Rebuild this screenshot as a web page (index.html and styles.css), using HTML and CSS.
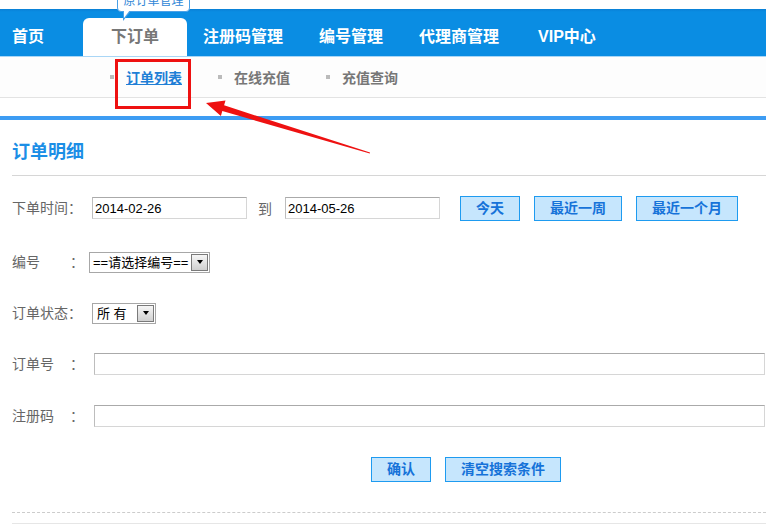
FILE: index.html
```html
<!DOCTYPE html>
<html>
<head>
<meta charset="utf-8">
<title>订单明细</title>
<link rel="stylesheet" href="styles.css">
</head>
<body>
<div class="header">
	<div class="nav">
		<a class="navItem home">首页</a>
		<a class="navItem current">下订单<span class="tip">原订单管理</span></a>
		<a class="navItem">注册码管理</a>
		<a class="navItem">编号管理</a>
		<a class="navItem agent">代理商管理</a>
		<a class="navItem">VIP中心</a>
	</div>
	<div class="subNav">
		<a class="subItem on">订单列表</a>
		<a class="subItem">在线充值</a>
		<a class="subItem">充值查询</a>
	</div>
</div>

<div class="content">
	<h2 class="title">订单明细</h2>
	<div class="search">
		<div class="row dates">
			<label class="lbl">下单时间：</label>
			<input class="txt date" type="text" value="2014-02-26">
			<span class="to">到</span>
			<input class="txt date" type="text" value="2014-05-26">
			<span class="quick">
				<button type="button" class="btn">今天</button>
				<button type="button" class="btn">最近一周</button>
				<button type="button" class="btn">最近一个月</button>
			</span>
		</div>
		<div class="row">
			<label class="lbl spaced near"><span class="lblName">编号</span>：</label>
			<span class="sel"><span class="selText">==请选择编号==</span><span class="selArrow"></span></span>
		</div>
		<div class="row">
			<label class="lbl">订单状态：</label>
			<span class="sel status"><span class="selText">所 有</span><span class="selArrow"></span></span>
		</div>
		<div class="row">
			<label class="lbl spaced"><span class="lblName">订单号</span>：</label>
			<input class="txt long" type="text">
		</div>
		<div class="row regcode">
			<label class="lbl spaced"><span class="lblName">注册码</span>：</label>
			<input class="txt long" type="text">
		</div>
		<div class="row actions">
			<button type="button" class="btn">确认</button>
			<button type="button" class="btn">清空搜索条件</button>
		</div>
	</div>
	<div class="dashLine"></div>
	<div class="footLine"></div>
</div>

<!-- annotation marks -->
<div class="markBox"></div>
<svg class="markArrow" width="180" height="70" viewBox="0 0 180 70">
	<polygon fill="#ee1111" points="6,13 25.5,10.5 24.1,15.3 170,62.6 169.8,63.6 22.3,21.1 20.9,25.9"/>
</svg>
</body>
</html>
```

FILE: styles.css
```css
body{
	margin: 0;
	font: 14px "Liberation Sans", "Noto Sans CJK SC", sans-serif;
	color: #666;
	background: #fff;
	position: relative;
	overflow: hidden;
}
.header{
	padding-top: 9px;
}
.nav{
	display: flex;
	align-items: flex-end;
	height: 47px;
	padding-left: 12px;
	background: linear-gradient(#0a80d6, #0a8de3 3px);
	border-bottom: 1px solid #a9d6f6;
}
.navItem{
	position: relative;
	height: 38px;
	line-height: 38px;
	font-size: 16px;
	font-weight: bold;
	color: #fff;
	margin-right: 36px;
	white-space: nowrap;
}
.navItem.home{
	margin-right: 39px;
}
.navItem.agent{
	margin-right: 39px;
}
.navItem.current{
	background: #fff;
	color: #777;
	padding: 0 28px;
	margin-right: 16px;
	border-radius: 6px 6px 0 0;
}
.tip{
	position: absolute;
	left: 34px;
	top: -28px;
	width: 71px;
	height: 20px;
	line-height: 20px;
	border: 1px solid #4aa0e6;
	border-radius: 4px;
	background: #fff;
	color: #2f86d6;
	font-size: 12px;
	font-weight: normal;
	text-align: center;
}
.tip:before{
	content: "";
	position: absolute;
	left: 5px;
	bottom: -10px;
	border-right: 8px solid transparent;
	border-top: 10px solid #4aa0e6;
}
.tip:after{
	content: "";
	position: absolute;
	left: 6px;
	bottom: -7px;
	border-right: 6px solid transparent;
	border-top: 8px solid #fff;
}
.subNav{
	display: flex;
	align-items: center;
	height: 40px;
	padding-left: 110px;
	background: #fdfdfd;
	border-bottom: 1px solid #e3e3e3;
}
.subItem{
	display: flex;
	align-items: center;
	font-weight: bold;
	color: #777;
	margin-right: 36px;
}
.subItem:before{
	content: "";
	width: 4px;
	height: 4px;
	background: #bbb;
	margin-right: 12px;
}
.subItem.on{
	color: #1f7fd6;
	text-decoration: underline;
}
.content{
	margin-top: 18px;
	border-top: 4px solid #3d9cf3;
	padding-left: 12px;
}
.title{
	margin: 0;
	padding: 20px 0 11px;
	font-size: 18px;
	line-height: 24px;
	color: #1b8ee6;
	border-bottom: 1px solid #d6d6d6;
}
.search{
	display: flex;
	flex-direction: column;
	gap: 27px;
	padding-top: 20px;
}
.row{
	display: flex;
	align-items: center;
	height: 24px;
}
.row.dates{
	margin-bottom: 3px;
}
.row.regcode{
	margin-top: 1px;
}
.row.actions{
	margin-top: 2px;
	padding-left: 359px;
	gap: 14px;
}
.lbl{
	flex: none;
	width: 70px;
	margin-right: 10px;
	white-space: nowrap;
	line-height: 20px;
}
.lbl.spaced{
	width: 72px;
}
.lbl.near{
	margin-right: 5px;
}
.lblName{
	display: inline-block;
	width: 58px;
}
.txt{
	box-sizing: border-box;
	height: 22px;
	padding: 0 2px;
	border: 1px solid #d6d6d6;
	border-top-color: #aaa;
	border-left-color: #bdbdbd;
	font: 13px "Liberation Sans", sans-serif;
	color: #000;
	outline: none;
}
.date{
	width: 155px;
}
.long{
	width: 671px;
}
.to{
	margin: 0 13px 0 11px;
}
.quick{
	display: flex;
	gap: 14px;
	margin-left: 20px;
}
.btn{
	box-sizing: border-box;
	height: 25px;
	padding: 0 15px;
	border: 1px solid #1e9bf0;
	background: #c6e6fd;
	color: #1673d9;
	font: bold 14px "Liberation Sans", "Noto Sans CJK SC", sans-serif;
	line-height: 23px;
	cursor: pointer;
}
.sel{
	display: inline-flex;
	align-items: center;
	box-sizing: border-box;
	height: 21px;
	padding: 0 1px 0 3px;
	border: 1px solid #a7a7a7;
	background: #fff;
	font-size: 13px;
	line-height: 17px;
	color: #000;
	white-space: pre;
}
.sel.status .selText{
	width: 37px;
	padding-left: 1px;
}
.selArrow{
	display: flex;
	align-items: center;
	justify-content: center;
	width: 15px;
	height: 15px;
	margin-left: 3px;
	border: 1px solid #7a7a7a;
	background: linear-gradient(#f6f6f6, #d0d0d0);
}
.selArrow:after{
	content: "";
	border-left: 3px solid transparent;
	border-right: 3px solid transparent;
	border-top: 4px solid #000;
}
.dashLine{
	margin-top: 31px;
	border-top: 1px dashed #ccc;
}
.footLine{
	margin-top: 10px;
	border-top: 2px solid #e6e6e6;
}
.markBox{
	position: absolute;
	left: 115px;
	top: 59px;
	width: 76px;
	height: 50px;
	box-sizing: border-box;
	border: 3px solid #ee1111;
}
.markArrow{
	position: absolute;
	left: 200px;
	top: 90px;
	pointer-events: none;
}
```
